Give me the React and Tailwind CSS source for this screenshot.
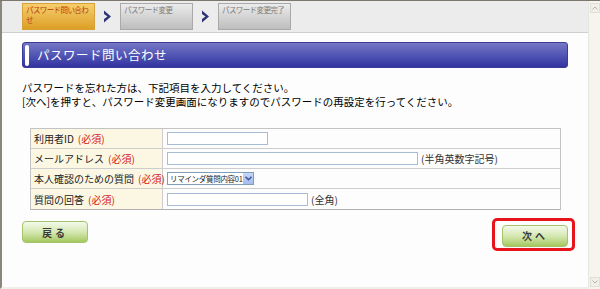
import React from 'react';

const jp = { fontFamily: '"Noto Sans CJK JP", "Noto Sans", sans-serif' };

const Step = ({ active, children }) => (
  <div
    className={
      active
        ? 'w-[73px] h-[27px] overflow-hidden whitespace-nowrap border border-[#d6a13a] bg-gradient-to-b from-[#f6cf6a] to-[#dc9f22] text-[#b8380c] text-[7.5px] leading-[10px] tracking-[-0.6px] px-[3px] pt-[1px]'
        : 'w-[73px] h-[27px] overflow-hidden whitespace-nowrap border border-[#a9a9a9] bg-gradient-to-b from-[#ececec] to-[#bdbdbd] text-[#7a7a7a] text-[7.5px] leading-[10px] tracking-[-0.6px] px-[3px] pt-[1px]'
    }
  >
    {children}
  </div>
);

const Arrow = () => (
  <div className="w-[25px] h-[27px] flex items-center justify-center">
    <svg width="9" height="13" viewBox="0 0 9 13">
      <path d="M1 0.5 L8 6.5 L1 12.5 L1 9 L4.5 6.5 L1 4 Z" fill="#2e3575" />
    </svg>
  </div>
);

const Req = () => <span className="ml-[4px] text-[#d42020]">(必須)</span>;

const Input = ({ w }) => (
  <div className={`${w} h-[13px] border border-[#a7bcd5] bg-white`} />
);

const Row = ({ label, children, last }) => (
  <div className={`flex h-[20px] ${last ? '' : 'border-b border-[#cdcdcd]'}`}>
    <div className="w-[132px] bg-[#fcf7e2] border-r border-[#cdcdcd] flex items-center pl-[3px] text-[10px] text-[#222] whitespace-nowrap">
      {label}
      <Req />
    </div>
    <div className="flex-1 flex items-center pl-[4px] gap-[3px] text-[10px] text-[#333]">{children}</div>
  </div>
);

export default function App() {
  return (
    <div className="w-[600px] h-[289px] flex border-t border-[#7d786c] bg-white overflow-hidden" style={jp}>
      <div className="w-[589px] flex flex-col border-l-2 border-[#8b877b] border-b-2 border-b-[#efeee8] border-r border-r-[#e6e6e6] bg-[#fdfdfd]">
        <div className="h-[32px] bg-[#ececec] border-b border-[#cfcfcf] flex items-start pt-[2px] pl-[20px]">
          <Step active>
            パスワード問い合わ
            <br />せ
          </Step>
          <Arrow />
          <Step>パスワード変更</Step>
          <Arrow />
          <Step>パスワード変更完了</Step>
        </div>

        <div className="ml-[20px] mt-[9px] w-[546px] h-[26px] rounded-[3px] border border-[#3b3b98] bg-gradient-to-b from-[#7676c6] to-[#3333a0] flex items-center">
          <div className="ml-[2px] w-[4px] h-[21px] rounded-[2px] bg-white" />
          <span className="ml-[8px] text-white text-[12.5px] tracking-[0.5px]">パスワード問い合わせ</span>
        </div>

        <div className="ml-[20px] mt-[13px] text-[10.5px] leading-[14px] text-black">
          <p>パスワードを忘れた方は、下記項目を入力してください。</p>
          <p>[次へ]を押すと、パスワード変更画面になりますのでパスワードの再設定を行ってください。</p>
        </div>

        <div className="ml-[28px] mt-[19px] w-[531px] border border-[#c3c3c3] border-b-[#b0b0b0]">
          <Row label="利用者ID">
            <Input w="w-[101px]" />
          </Row>
          <Row label="メールアドレス">
            <Input w="w-[251px]" />
            <span>(半角英数字記号)</span>
          </Row>
          <Row label="本人確認のための質問">
            <div className="w-[87px] h-[13px] border border-[#7f9db9] bg-white flex items-center justify-between overflow-hidden">
              <span className="pl-[2px] text-[7.5px] leading-[11px] tracking-[-0.3px] text-[#222] whitespace-nowrap">リマインダ質問内容01</span>
              <div className="w-[11px] h-[11px] shrink-0 bg-gradient-to-b from-[#c6d6f8] to-[#a4bcef] flex items-center justify-center">
                <svg width="7" height="5" viewBox="0 0 7 5">
                  <path d="M0.5 0.8 L3.5 3.8 L6.5 0.8" fill="none" stroke="#34508f" strokeWidth="1.3" />
                </svg>
              </div>
            </div>
          </Row>
          <Row label="質問の回答" last>
            <Input w="w-[141px]" />
            <span>(全角)</span>
          </Row>
        </div>

        <div className="mt-[8px] flex items-start justify-between pl-[20px] pr-[13px]">
          <button className="mt-[3px] w-[66px] h-[22px] rounded-[4px] border border-[#a5c46a] bg-gradient-to-b from-[#f4f9ea] via-[#d5e8b2] to-[#a6c85e] text-[10px] font-bold text-[#3a3a3a] tracking-[3px]">
            戻る
          </button>
          <div className="rounded-[5px] border-[3px] border-[#e8141b] pl-[7px] pr-[4px] pt-0 pb-[1px]">
            <button className="w-[66px] h-[22px] rounded-[4px] border border-[#a5c46a] bg-gradient-to-b from-[#f4f9ea] via-[#d5e8b2] to-[#a6c85e] text-[10px] font-bold text-[#3a3a3a] tracking-[3px]">
              次へ
            </button>
          </div>
        </div>
      </div>

      <div className="flex-1 bg-[#f6f4ec] flex flex-col justify-between items-center py-[2px]">
        <div className="w-[10px] h-[10px] border border-[#e2e0d6] bg-[#f0efe8] flex items-center justify-center">
          <svg width="6" height="4" viewBox="0 0 6 4">
            <path d="M0.5 3.5 L3 1 L5.5 3.5" fill="none" stroke="#b5b3a8" strokeWidth="1" />
          </svg>
        </div>
        <div className="w-[10px] h-[10px] border border-[#e2e0d6] bg-[#f0efe8] flex items-center justify-center">
          <svg width="6" height="4" viewBox="0 0 6 4">
            <path d="M0.5 0.5 L3 3 L5.5 0.5" fill="none" stroke="#b5b3a8" strokeWidth="1" />
          </svg>
        </div>
      </div>
    </div>
  );
}
